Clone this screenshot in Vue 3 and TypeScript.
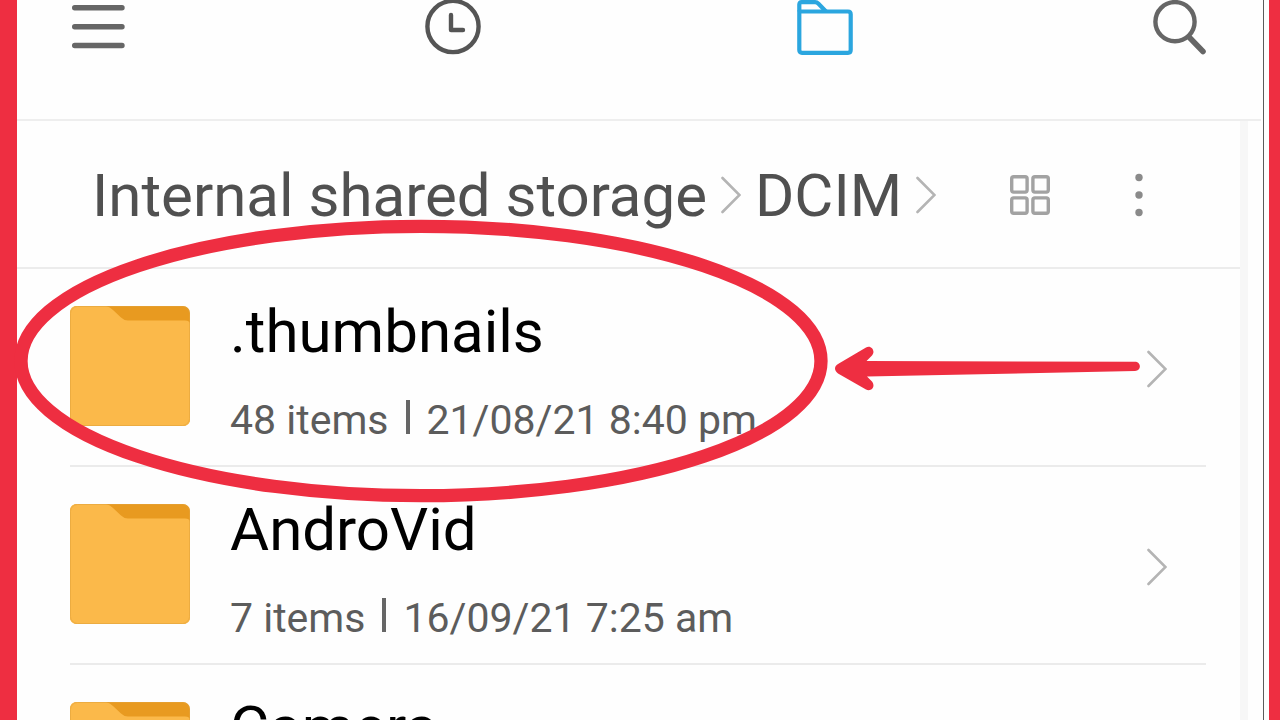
<script setup lang="ts">
interface Folder {
  name: string
  items: string
  modified: string
}

const path: string[] = ['Internal shared storage', 'DCIM']

const folders: Folder[] = [
  { name: '.thumbnails', items: '48 items', modified: '21/08/21 8:40 pm' },
  { name: 'AndroVid', items: '7 items', modified: '16/09/21 7:25 am' },
  { name: 'Camera', items: '', modified: '' },
]
</script>

<template>
  <div class="frame">
    <main class="screen">
      <header class="toolbar">
        <button class="icon-button" type="button" aria-label="Menu">
          <svg width="54" height="55" viewBox="0 0 54 55" fill="none" stroke="#666" stroke-width="5.4" stroke-linecap="round">
            <path d="M3.7 7.7H51M3.7 26.7H51M3.7 45.5H51" />
          </svg>
        </button>
        <nav class="tabs">
          <button class="icon-button" type="button" aria-label="Recent">
            <svg width="56" height="55" viewBox="0 0 56 55" fill="none" stroke="#555" stroke-linecap="round" stroke-linejoin="round">
              <circle cx="28" cy="26.5" r="25.6" stroke-width="4.4" />
              <path d="M26 15V30H38" stroke-width="4.4" />
            </svg>
          </button>
          <button class="icon-button" type="button" aria-label="Storage">
            <svg width="56" height="55" viewBox="0 0 56 55" fill="none" stroke="#2ba6df" stroke-width="4.2" stroke-linejoin="round">
              <path d="M2.3 11.5V4.5Q2.3 2.2 4.6 2.2H18Q20 2.2 21.500 3.7L29 11.5" />
              <path d="M2.3 11.5H51Q53.7 11.5 53.7 14.2V50Q53.7 52.8 51 52.8H5Q2.3 52.8 2.3 50Z" />
            </svg>
          </button>
        </nav>
        <button class="icon-button" type="button" aria-label="Search">
          <svg width="54" height="55" viewBox="0 0 54 55" fill="none" stroke="#666" stroke-linecap="round">
            <circle cx="22" cy="21.7" r="19.6" stroke-width="4.4" />
            <path d="M36 37L50 51.5" stroke-width="5.6" />
          </svg>
        </button>
      </header>

      <div class="content">
        <div class="pathbar">
          <nav class="crumbs" aria-label="Path">
            <template v-for="part in path" :key="part">
              <a class="crumb" href="#">{{ part }}</a>
              <svg class="chevron" width="20" height="38" viewBox="0 0 20 38" fill="none" stroke="#b4b4b4" stroke-width="2.6" stroke-linecap="round">
                <path d="M1.5 2L18.5 19L1.5 36" />
              </svg>
            </template>
          </nav>
          <div class="actions">
            <button class="icon-button" type="button" aria-label="Grid view">
              <svg width="40" height="40" viewBox="0 0 40 40" fill="none" stroke="#a2a2a2" stroke-width="3.4">
                <rect x="1.7" y="1.7" width="15.4" height="15.4" rx="2" />
                <rect x="22.9" y="1.7" width="15.4" height="15.4" rx="2" />
                <rect x="1.7" y="22.9" width="15.4" height="15.4" rx="2" />
                <rect x="22.9" y="22.9" width="15.4" height="15.4" rx="2" />
              </svg>
            </button>
            <button class="icon-button" type="button" aria-label="More options">
              <svg width="8" height="44" viewBox="0 0 8 44" fill="#8a8a8a">
                <circle cx="4" cy="4.500" r="3.7" />
                <circle cx="4" cy="22" r="3.7" />
                <circle cx="4" cy="39.5" r="3.7" />
              </svg>
            </button>
          </div>
        </div>

        <ul class="list">
          <li v-for="folder in folders" :key="folder.name" class="row">
            <svg class="folder" width="120" height="120" viewBox="0 0 120 120">
              <rect width="120" height="120" rx="7" fill="#e89a20" />
              <path d="M7 0H36Q40 1 43 4L51 11.5Q54 14.5 58 14.5H115Q120 14.5 120 18V113Q120 120 113 120H7Q0 120 0 113V7Q0 0 7 0Z" fill="#fbb94a" />
              <rect x="0.5" y="0.5" width="119" height="119" rx="7" fill="none" stroke="#e3a33c" stroke-opacity="0.6" />
            </svg>
            <div class="info">
              <a class="name" href="#">{{ folder.name }}</a>
              <div v-if="folder.items" class="meta">
                <span>{{ folder.items }}</span>
                <span class="bar"></span>
                <span>{{ folder.modified }}</span>
              </div>
            </div>
            <svg class="chevron" width="20" height="38" viewBox="0 0 20 38" fill="none" stroke="#b4b4b4" stroke-width="2.6" stroke-linecap="round">
              <path d="M1.5 2L18.5 19L1.5 36" />
            </svg>
          </li>
        </ul>
      </div>
    </main>

    <svg class="annotation" width="1280" height="720" viewBox="0 0 1280 720" fill="none" aria-hidden="true">
      <ellipse cx="421" cy="361" rx="400" ry="134.7" stroke="#ee2e41" stroke-width="13.3" />
      <path
        d="M866 347.5C871 344.5 876 351 872 355.5L866.5 361L1135 361.7C1141.5 361.7 1141.5 371 1135 371L867 376.5L872 381.5C876 387 871 392 866 389.5L838 373.5C834 370.5 834 366.5 838 364Z"
        fill="#ee2e41"
      />
    </svg>
  </div>
</template>

<style>
body {
  margin: 0;
}
</style>

<style scoped>
.frame {
  position: relative;
  box-sizing: border-box;
  height: 100vh;
  overflow: hidden;
  padding: 0 11px 0 17px;
  background: #ee2e41;
  font-family: Roboto, "Noto Sans", sans-serif;
}

.screen {
  display: flex;
  flex-direction: column;
  height: 100%;
  background: linear-gradient(#5c5c5c, #5c5c5c) no-repeat right 5px top / 1px 100% #fefefe;
}

.toolbar {
  display: flex;
  align-items: flex-start;
  justify-content: space-between;
  flex: none;
  box-sizing: border-box;
  height: 121px;
  margin-right: 8px;
  padding: 0 54px;
  border-bottom: 2px solid #eeeeee;
}

.tabs {
  display: flex;
  gap: 316px;
}

.icon-button {
  display: block;
  margin: 0;
  padding: 0;
  border: 0;
  background: none;
}

.icon-button svg {
  display: block;
}

.content {
  flex: 1;
  margin-right: 21px;
  border-right: 8px solid #f7f7f7;
}

.pathbar {
  display: flex;
  align-items: center;
  justify-content: space-between;
  box-sizing: border-box;
  height: 148px;
  padding: 2px 97px 0 75px;
  border-bottom: 2px solid #ececec;
}

.crumbs {
  display: flex;
  align-items: center;
  gap: 14px;
}

.crumb {
  padding-top: 2px;
  color: #505050;
  font-size: 60px;
  line-height: 72px;
  text-decoration: none;
  white-space: nowrap;
}

.actions {
  display: flex;
  align-items: center;
  gap: 85px;
}

.chevron {
  flex: none;
}

.list {
  margin: 0;
  padding: 0 34px 0 53px;
  list-style: none;
}

.row {
  display: flex;
  align-items: center;
  box-sizing: border-box;
  height: 198px;
  padding-right: 39px;
  border-bottom: 2px solid #ebebeb;
}

.row .chevron {
  margin-top: 4px;
}

.folder {
  flex: none;
  align-self: flex-start;
  margin-top: 37px;
}

.info {
  flex: 1;
  align-self: flex-start;
  padding: 27px 0 0 40px;
}

.name {
  display: block;
  color: #000;
  font-size: 60px;
  line-height: 72px;
  text-decoration: none;
}

.meta {
  display: flex;
  align-items: center;
  gap: 17px;
  margin-top: 24px;
  color: #5c5c5c;
  font-size: 41px;
  line-height: 56px;
  white-space: nowrap;
}

.bar {
  width: 4px;
  height: 34px;
  margin-bottom: 6px;
  background: #666;
}

.annotation {
  position: absolute;
  top: 0;
  left: 0;
}
</style>
